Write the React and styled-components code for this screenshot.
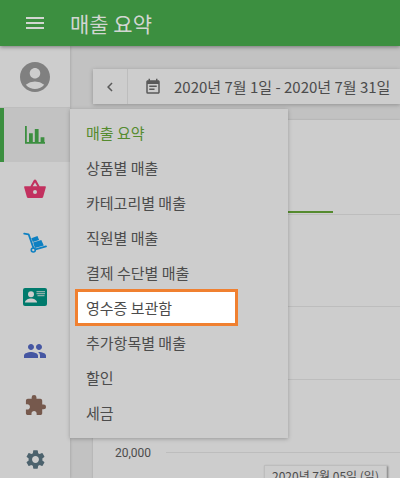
import React, { useState } from "react";
import styled, { createGlobalStyle, ThemeProvider } from "styled-components";
import {
  MdAccountCircle,
  MdChevronLeft,
  MdEventNote,
  MdExtension,
  MdMenu,
  MdPeople,
  MdSettings,
} from "react-icons/md";

const theme = {
  colors: {
    green: "#3c8f40",
    lime: "#558b2f",
    orange: "#f08030",
    surface: "#cdcdcd",
    background: "#c2c2c2",
    line: "#bdbdbd",
    text: "#4c4c4c",
    icon: "#5a5a5a",
  },
};

const reports = [
  "매출 요약",
  "상품별 매출",
  "카테고리별 매출",
  "직원별 매출",
  "결제 수단별 매출",
  "영수증 보관함",
  "추가항목별 매출",
  "할인",
  "세금",
];

const gridLines = ["", "", "20,000"];

const ChartIcon = () => (
  <svg width="20" height="18" viewBox="0 0 20 18" fill="currentColor">
    <path d="M0 0h1.8v16H20v1.8H0z" />
    <path d="M4 7.2h3.8v9H4zM9.8 3h3.8v13.2H9.8zM15.6 11.2h3.8v5h-3.8z" />
  </svg>
);

const BasketIcon = () => (
  <svg width="22" height="20" viewBox="0 0 22 20" fill="currentColor">
    <path
      fillRule="evenodd"
      d="M11 .4c.5 0 .9.3 1.100.700L15.600 7.300H21c.6 0 1 .5.8 1.100l-2.600 9.300c-.2.800-.9 1.300-1.700 1.300h-13c-.8 0-1.500-.5-1.700-1.300L.2 8.400C0 7.800.4 7.300 1 7.300h5.400L9.900 1.100c.2-.4.6-.7 1.100-.7zm0 3L8.700 7.300h4.600zm0 7.600a2 2 0 1 0 0 4 2 2 0 0 0 0-4z"
    />
  </svg>
);

const TrolleyIcon = () => (
  <svg width="24" height="22" viewBox="0 0 24 22" fill="currentColor">
    <path
      d="M1.2 1.7l4.4.6 4.800 13.600M12.500 17.300L23 14.400"
      fill="none"
      stroke="currentColor"
      strokeWidth="1.8"
      strokeLinecap="round"
      strokeLinejoin="round"
    />
    <path d="M8.3 6.200l6.200-2.200 1.600 3.900-6.300 2.100zM10.100 10.600l8.200-2.600 2.500 5.400-8.900 2.600z" />
    <circle
      cx="10.3"
      cy="18"
      r="2"
      fill="none"
      stroke="currentColor"
      strokeWidth="1.6"
    />
  </svg>
);

const CardIcon = () => (
  <svg width="24" height="18" viewBox="0 0 24 18">
    <rect width="24" height="18" rx="2" fill="currentColor" />
    <g fill="#cdcdcd">
      <circle cx="8" cy="6.2" r="3" />
      <path d="M2 14.6c0-2.500 3.500-4 6-4s6 1.500 6 4z" />
    </g>
    <path
      d="M13.5 3.600h8.500M13.500 5.600h8.500M14.500 7.600h7"
      stroke="#8db0aa"
      strokeWidth="1.4"
    />
  </svg>
);

const sections = [
  { label: "매출", color: "#3c8f40", icon: <ChartIcon /> },
  { label: "상품", color: "#c2315f", icon: <BasketIcon /> },
  { label: "재고", color: "#0d80c2", icon: <TrolleyIcon /> },
  { label: "직원", color: "#007a6c", icon: <CardIcon /> },
  { label: "고객", color: "#4556a2", icon: <MdPeople size={24} /> },
  { label: "통합", color: "#76594d", icon: <MdExtension size={23} /> },
  { label: "설정", color: "#4c626d", icon: <MdSettings size={23} /> },
];

const App = () => {
  const [current, setCurrent] = useState("매출 요약");

  return (
    <ThemeProvider theme={theme}>
      <GlobalStyle />
      <Page>
        <Header>
          <MenuBtn type="button" aria-label="메뉴">
            <MdMenu size={24} />
          </MenuBtn>
          <Title>매출 요약</Title>
        </Header>
        <Body>
          <Sidebar>
            <Account href="#account" aria-label="계정">
              <MdAccountCircle size={36} />
            </Account>
            {sections.map((section, index) => (
              <Section key={section.label} $active={index === 0}>
                <SectionLink
                  href="#section"
                  aria-label={section.label}
                  $color={section.color}
                >
                  {section.icon}
                </SectionLink>
                {index === 0 && (
                  <SubMenu>
                    {reports.map((report) => (
                      <SubMenuLink
                        key={report}
                        href="#report"
                        $current={report === current}
                        $marked={report === "영수증 보관함"}
                        onClick={() => setCurrent(report)}
                      >
                        {report}
                      </SubMenuLink>
                    ))}
                  </SubMenu>
                )}
              </Section>
            ))}
          </Sidebar>
          <Content>
            <DateBar>
              <PrevBtn type="button" aria-label="이전">
                <MdChevronLeft size={18} />
              </PrevBtn>
              <RangeBtn type="button">
                <MdEventNote size={18} />
                2020년 7월 1일 - 2020년 7월 31일
              </RangeBtn>
            </DateBar>
            <Card>
              <Summary>
                <Indicator />
              </Summary>
              <Chart>
                {gridLines.map((value, index) => (
                  <GridRow key={index}>
                    <AxisLabel>{value}</AxisLabel>
                    <GridLine />
                  </GridRow>
                ))}
                <Tooltip>2020년 7월 05일 (일)</Tooltip>
              </Chart>
            </Card>
          </Content>
        </Body>
      </Page>
    </ThemeProvider>
  );
};

const GlobalStyle = createGlobalStyle`
  * {
    box-sizing: border-box;
  }

  body {
    margin: 0;
    font-family: "Noto Sans CJK KR", sans-serif;
    color: ${theme.colors.text};
  }

  button {
    font: inherit;
    color: inherit;
    background: none;
    border: none;
    padding: 0;
    cursor: pointer;
  }

  a {
    color: inherit;
    text-decoration: none;
  }

  svg {
    display: block;
    flex-shrink: 0;
  }
`;

const Page = styled.div`
  display: flex;
  flex-direction: column;
  height: 100vh;
  overflow: hidden;
  background: ${(props) => props.theme.colors.background};
`;

const Header = styled.header`
  position: relative;
  z-index: 3;
  display: flex;
  align-items: center;
  flex-shrink: 0;
  height: 46px;
  color: #d2d6d2;
  background: ${(props) => props.theme.colors.green};
  box-shadow: 0 1px 4px rgba(0, 0, 0, 0.4);
`;

const MenuBtn = styled.button`
  display: flex;
  justify-content: center;
  width: 70px;
`;

const Title = styled.h1`
  margin: 0;
  font-size: 21px;
  font-weight: 400;
  line-height: 24px;
`;

const Body = styled.div`
  display: flex;
  flex: 1;
  min-height: 0;
`;

const Sidebar = styled.nav`
  position: relative;
  z-index: 2;
  display: flex;
  flex-direction: column;
  flex-shrink: 0;
  width: 70px;
  background: ${(props) => props.theme.colors.surface};
  box-shadow: 0 0 3px rgba(0, 0, 0, 0.2);
`;

const Account = styled.a`
  display: flex;
  justify-content: center;
  align-items: center;
  flex-shrink: 0;
  height: 62px;
  color: #808080;
  border-bottom: 1px solid ${(props) => props.theme.colors.line};
`;

const Section = styled.div`
  position: relative;
  flex-shrink: 0;
  height: 54px;
  border-left: 4px solid
    ${(props) => (props.$active ? props.theme.colors.green : "transparent")};
  background: ${(props) =>
    props.$active ? props.theme.colors.background : "none"};
`;

const SectionLink = styled.a`
  display: flex;
  justify-content: center;
  align-items: center;
  height: 100%;
  padding-right: 4px;
  color: ${(props) => props.$color};
`;

const SubMenu = styled.div`
  position: absolute;
  top: 1px;
  left: 100%;
  display: flex;
  flex-direction: column;
  width: 218px;
  padding: 6px 0 8px;
  background: ${(props) => props.theme.colors.surface};
  box-shadow: 0 1px 4px rgba(0, 0, 0, 0.25);
`;

const SubMenuLink = styled.a`
  margin: 0 51px 0 6px;
  padding-left: 10px;
  font-size: 15px;
  line-height: 35px;
  white-space: nowrap;
  color: ${(props) =>
    props.$current ? props.theme.colors.lime : props.theme.colors.text};
  background: ${(props) => (props.$marked ? "#fff" : "none")};
  outline: ${(props) =>
    props.$marked ? `3px solid ${props.theme.colors.orange}` : "none"};
  outline-offset: -2px;
`;

const Content = styled.main`
  display: flex;
  flex-direction: column;
  flex: 1;
  gap: 16px;
  min-width: 0;
  padding: 23px 0 0 23px;
`;

const DateBar = styled.div`
  display: flex;
  flex-shrink: 0;
  height: 35px;
  background: ${(props) => props.theme.colors.surface};
  box-shadow: 0 1px 4px rgba(0, 0, 0, 0.25);

  svg {
    color: ${(props) => props.theme.colors.icon};
  }
`;

const PrevBtn = styled.button`
  display: flex;
  justify-content: center;
  align-items: center;
  width: 35px;
  flex-shrink: 0;
  border-right: 1px solid ${(props) => props.theme.colors.line};
`;

const RangeBtn = styled.button`
  display: flex;
  align-items: center;
  flex: 1;
  gap: 12px;
  padding-left: 16px;
  font-size: 15px;
  white-space: nowrap;
`;

const Card = styled.section`
  flex: 1;
  background: ${(props) => props.theme.colors.surface};
  box-shadow: 0 0 2px rgba(0, 0, 0, 0.15);
`;

const Summary = styled.div`
  display: flex;
  align-items: flex-end;
  height: 95px;
  padding-bottom: 1px;
  border-bottom: 1px solid ${(props) => props.theme.colors.line};
`;

const Indicator = styled.div`
  width: 240px;
  height: 2px;
  background: ${(props) => props.theme.colors.lime};
`;

const Chart = styled.div`
  position: relative;
  padding-top: 55px;
`;

const GridRow = styled.div`
  display: flex;
  align-items: center;
  height: 73px;
`;

const AxisLabel = styled.span`
  width: 73px;
  padding-right: 15px;
  font-family: Roboto, sans-serif;
  font-size: 12px;
  text-align: right;
`;

const GridLine = styled.div`
  flex: 1;
  height: 1px;
  background: ${(props) => props.theme.colors.line};
`;

const Tooltip = styled.div`
  position: absolute;
  top: 250px;
  left: 171px;
  padding: 1px 7px;
  font-size: 12px;
  line-height: 18px;
  white-space: nowrap;
  background: ${(props) => props.theme.colors.surface};
  border: 1px solid ${(props) => props.theme.colors.line};
  box-shadow: 1px 1px 2px rgba(0, 0, 0, 0.4);
`;

export default App;
